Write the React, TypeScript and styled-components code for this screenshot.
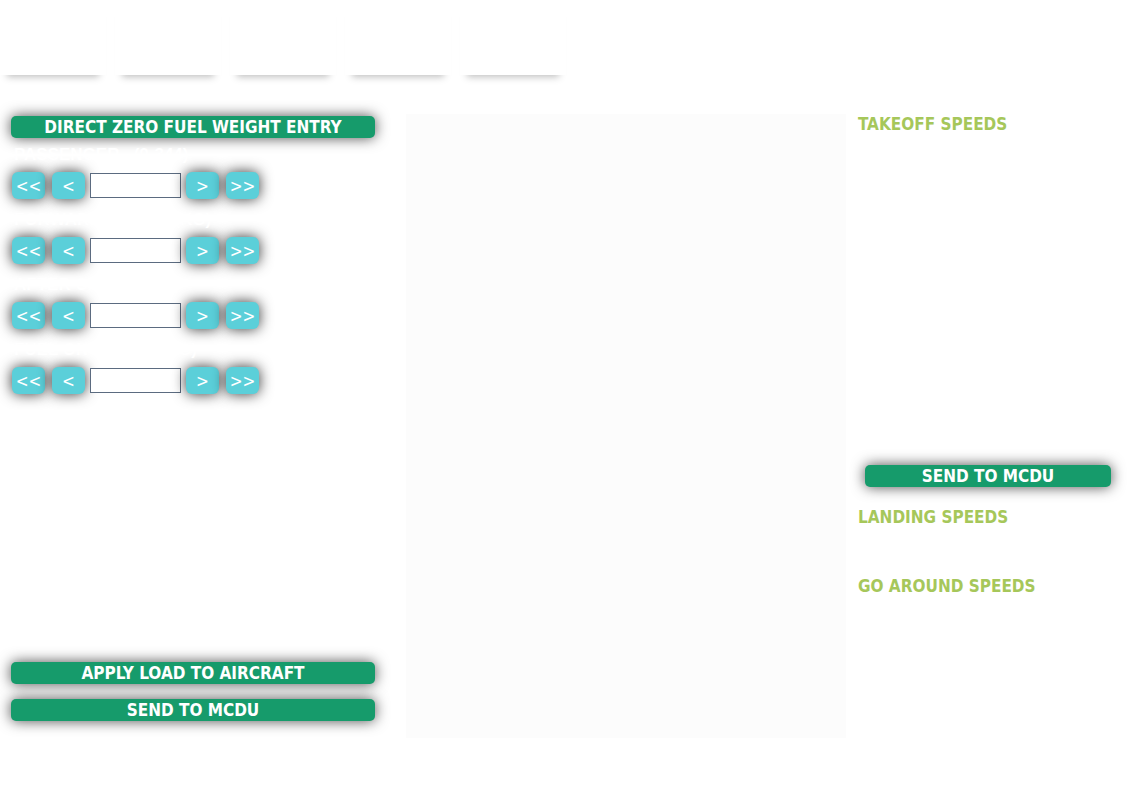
import React from "react";
import styled, { createGlobalStyle } from "styled-components";

const GlobalStyle = createGlobalStyle`
  body {
    margin: 0;
    background: #ffffff;
    font-family: "DejaVu Sans Condensed", "DejaVu Sans", sans-serif;
  }
`;

const tabs = ["", "", "", "", ""];

const loadFields = [
  "PASSENGER   (0-344)",
  "FORWARD CARGO (KG)",
  "AFTER CARGO (KG)",
  "FUEL ON BOARD (KG)",
];

const App: React.FC = () => {
  return (
    <>
      <GlobalStyle />
      <Page>
        <TabBar>
          {tabs.map((t, i) => (
            <Tab key={i}>{t}</Tab>
          ))}
        </TabBar>

        <Content>
          <LeftColumn>
            <ActionButton>DIRECT ZERO FUEL WEIGHT ENTRY</ActionButton>
            <Fields>
              {loadFields.map((label) => (
                <Field key={label}>
                  <FieldLabel>{label}</FieldLabel>
                  <StepperRow>
                    <StepButton>&lt;&lt;</StepButton>
                    <StepButton>&lt;</StepButton>
                    <StepInput type="text" />
                    <StepButton>&gt;</StepButton>
                    <StepButton>&gt;&gt;</StepButton>
                  </StepperRow>
                </Field>
              ))}
            </Fields>
            <BottomActions>
              <ActionButton>APPLY LOAD TO AIRCRAFT</ActionButton>
              <ActionButton>SEND TO MCDU</ActionButton>
            </BottomActions>
          </LeftColumn>

          <CenterPanel />

          <RightColumn>
            <SpeedHeading>TAKEOFF SPEEDS</SpeedHeading>
            <SpeedBlock />
            <RightSend>SEND TO MCDU</RightSend>
            <SpeedHeading>LANDING SPEEDS</SpeedHeading>
            <SpeedSpacer />
            <SpeedHeading>GO AROUND SPEEDS</SpeedHeading>
          </RightColumn>
        </Content>
      </Page>
    </>
  );
};

const Page = styled.div`
  width: 1143px;
  min-height: 800px;
`;

const TabBar = styled.div`
  display: flex;
  gap: 9px;
  height: 75px;
`;

const Tab = styled.div`
  width: 106px;
  height: 75px;
  background: #ffffff;
  box-shadow: 0 9px 7px -7px rgba(0, 0, 0, 0.25);
`;

const Content = styled.div`
  display: flex;
  padding: 39px 0 0 11px;
`;

const LeftColumn = styled.div`
  width: 364px;
  display: flex;
  flex-direction: column;
  padding-top: 2px;
`;

const ActionButton = styled.button`
  width: 364px;
  height: 22px;
  padding: 0;
  border: none;
  border-radius: 5px;
  background: #169b6b;
  color: #ffffff;
  font-family: "DejaVu Sans Condensed", "DejaVu Sans", sans-serif;
  font-size: 17px;
  font-weight: 600;
  line-height: 22px;
  box-shadow: 0 0 14px rgba(0, 0, 0, 0.7);
  cursor: pointer;
`;

const Fields = styled.div`
  display: flex;
  flex-direction: column;
  margin-top: 6px;
`;

const Field = styled.div`
  display: flex;
  flex-direction: column;
  height: 65px;
`;

const FieldLabel = styled.div`
  position: relative;
  z-index: 1;
  height: 28px;
  padding-left: 3px;
  color: #ffffff;
  font-family: "Liberation Sans", Arial, sans-serif;
  font-size: 17px;
  font-weight: 700;
  line-height: 22px;
  white-space: pre;
`;

const StepperRow = styled.div`
  display: flex;
  align-items: center;
  gap: 7px;
  padding-left: 1px;
`;

const StepButton = styled.button`
  width: 33px;
  height: 27px;
  padding: 0;
  border: none;
  border-radius: 6px;
  background: #5bcfd9;
  color: #ffffff;
  font-family: "DejaVu Sans Condensed", "DejaVu Sans", sans-serif;
  font-size: 17px;
  box-shadow: 0 0 14px rgba(0, 0, 0, 0.8);
  cursor: pointer;
`;

const StepInput = styled.input`
  box-sizing: border-box;
  width: 91px;
  height: 25px;
  margin: 0 -2px;
  border: 1px solid #5b6b80;
  background: #ffffff;
`;

const BottomActions = styled.div`
  display: flex;
  flex-direction: column;
  gap: 15px;
  margin-top: 258px;
`;

const CenterPanel = styled.div`
  width: 440px;
  height: 624px;
  margin-left: 31px;
  background: #fcfcfc;
`;

const RightColumn = styled.div`
  display: flex;
  flex-direction: column;
  margin-left: 12px;
  width: 285px;
`;

const SpeedHeading = styled.div`
  color: #a6c75a;
  font-family: "DejaVu Sans Condensed", "DejaVu Sans", sans-serif;
  font-size: 17px;
  font-weight: 600;
  line-height: 20px;
`;

const SpeedBlock = styled.div`
  height: 331px;
`;

const RightSend = styled(ActionButton)`
  width: 246px;
  margin: 0 0 20px 7px;
`;

const SpeedSpacer = styled.div`
  height: 49px;
`;

export default App;
